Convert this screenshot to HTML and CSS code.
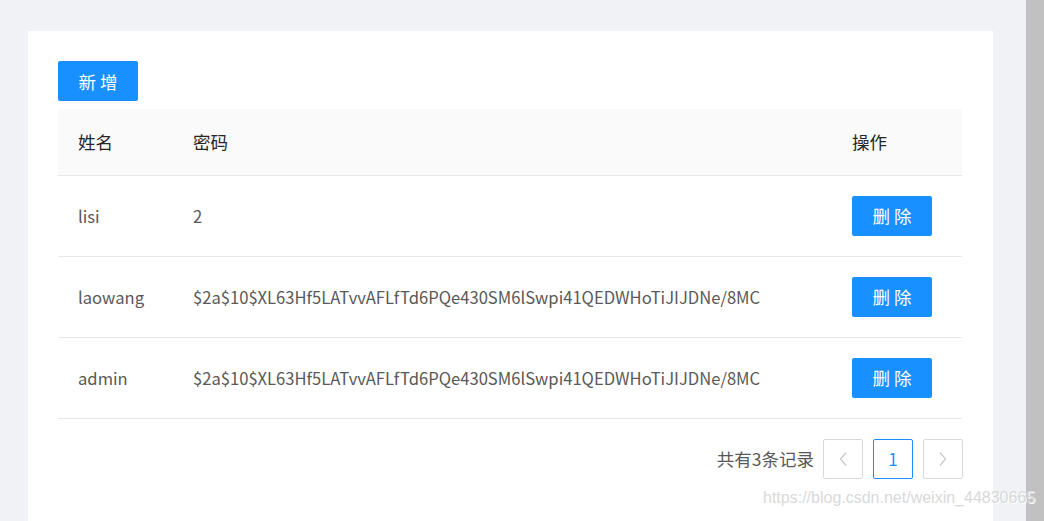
FILE: index.html
```html
<!doctype html>
<html lang="zh">
<head>
    <meta charset="UTF-8">
    <title>用户列表</title>
    <link rel="stylesheet" href="styles.css">
</head>
<body>
    <div class="page">
        <main class="card">
            <button class="btn btn-primary">新增</button>
            <table class="user-table">
                <thead>
                    <tr>
                        <th class="col-name">姓名</th>
                        <th>密码</th>
                        <th class="col-op">操作</th>
                    </tr>
                </thead>
                <tbody>
                    <tr>
                        <td>lisi</td>
                        <td>2</td>
                        <td><button class="btn btn-primary">删除</button></td>
                    </tr>
                    <tr>
                        <td>laowang</td>
                        <td>$2a$10$XL63Hf5LATvvAFLfTd6PQe430SM6lSwpi41QEDWHoTiJIJDNe/8MC</td>
                        <td><button class="btn btn-primary">删除</button></td>
                    </tr>
                    <tr>
                        <td>admin</td>
                        <td>$2a$10$XL63Hf5LATvvAFLfTd6PQe430SM6lSwpi41QEDWHoTiJIJDNe/8MC</td>
                        <td><button class="btn btn-primary">删除</button></td>
                    </tr>
                </tbody>
            </table>
            <div class="pager">
                <span class="pager-total">共有3条记录</span>
                <button class="pager-item">
                    <svg width="10" height="16" viewBox="0 0 10 16"><path d="M8 1.5 2.5 8 8 14.5" fill="none" stroke="currentColor" stroke-width="1.2"/></svg>
                </button>
                <button class="pager-item active">1</button>
                <button class="pager-item">
                    <svg width="10" height="16" viewBox="0 0 10 16"><path d="M2 1.5 7.5 8 2 14.5" fill="none" stroke="currentColor" stroke-width="1.2"/></svg>
                </button>
            </div>
        </main>
    </div>
    <div class="scrollbar"></div>
    <span class="watermark">https://blog.csdn.net/weixin_44830665</span>
</body>
</html>
```

FILE: styles.css
```css
* {
    margin: 0;
    padding: 0;
    box-sizing: border-box;
}

html,
body {
    height: 100%;
    overflow: hidden;
}

body {
    display: flex;
    background: #f0f2f5;
    font-family: "Noto Sans CJK SC", "Liberation Sans", sans-serif;
    font-size: 17.5px;
    color: #595959;
}

.page {
    flex: 1;
    padding: 31px 33px 0 28px;
}

.scrollbar {
    width: 18px;
    background: #c1c1c1;
}

.card {
    height: 100%;
    padding: 30px 31px 0 30px;
    background: #fff;
}

button {
    outline: none;
    font-family: inherit;
    cursor: pointer;
}

.btn {
    width: 80px;
    height: 40px;
    border: none;
    border-radius: 2px;
    font-size: 17.5px;
    letter-spacing: 4px;
    text-indent: 4px;
}

.btn-primary {
    background: #1890ff;
    color: #fff;
}

.user-table {
    width: 100%;
    margin-top: 8px;
    border-collapse: collapse;
}

.user-table th,
.user-table td {
    padding: 0 20px;
    text-align: left;
    border-bottom: 1px solid #e8e8e8;
}

.user-table th {
    height: 66px;
    background: #fafafa;
    font-weight: normal;
    color: #262626;
}

.user-table td {
    height: 81px;
    font-size: 16.6px;
}

.col-name {
    width: 115px;
}

.col-op {
    width: 130px;
}

.pager {
    display: flex;
    align-items: center;
    justify-content: flex-end;
    gap: 10px;
    margin: 20px -1px 0 0;
}

.pager-total {
    margin-right: -1px;
}

.pager-item {
    display: flex;
    align-items: center;
    justify-content: center;
    width: 40px;
    height: 40px;
    border: 1px solid #d9d9d9;
    border-radius: 2px;
    background: #fff;
    color: #c8c8c8;
    font-size: 17px;
}

.pager-item.active {
    border-color: #1890ff;
    color: #1890ff;
}

.watermark {
    position: absolute;
    left: 763px;
    top: 489px;
    font-family: "Liberation Sans", sans-serif;
    font-size: 16px;
    color: #d9d9d9;
    text-shadow: 1px 1px 0 #fff;
}
```
